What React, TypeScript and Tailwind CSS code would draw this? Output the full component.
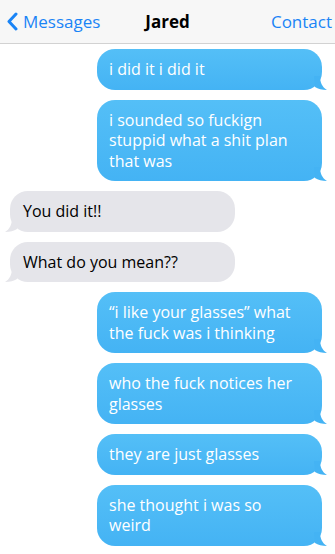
import React from "react";

const blue = [
  "i did it i did it",
  "i sounded so fuckign stuppid what a shit plan that was",
];
const gray = ["You did it!!", "What do you mean??"];
const blue2 = [
  "\u201ci like your glasses\u201d what the fuck was i thinking",
  "who the fuck notices her glasses",
  "they are just glasses",
  "she thought i was so weird",
];

function Sent({ text }: { text: string }) {
  return (
    <div className="flex justify-end pr-[13px]">
      <div className="relative w-[225px] rounded-[18px] bg-gradient-to-b from-[#54bff7] to-[#44b3f4] pl-[12px] pr-[22px] py-[10px] text-[16px] leading-[20.5px] text-white">
        {text}
        <svg className="absolute -right-[6px] bottom-0" width="14" height="14" viewBox="0 0 14 14">
          <path d="M0 0 L6 0 C6 6 8 11 13 14 C8 14 4 13 1 11 Z" fill="#44b3f4" />
        </svg>
      </div>
    </div>
  );
}

function Received({ text }: { text: string }) {
  return (
    <div className="flex justify-start pl-[10px]">
      <div className="relative w-[225px] rounded-[18px] bg-[#e5e5ea] px-[13px] py-[10px] text-[16px] leading-[20.5px] text-black">
        {text}
        <svg className="absolute -left-[6px] bottom-0" width="14" height="14" viewBox="0 0 14 14">
          <path d="M14 0 L8 0 C8 6 6 11 1 14 C6 14 10 13 13 11 Z" fill="#e5e5ea" />
        </svg>
      </div>
    </div>
  );
}

export default function App() {
  return (
    <div className="w-[335px] h-[554px] bg-white overflow-hidden" style={{ fontFamily: '"Open Sans", sans-serif' }}>
      <div className="h-[44px] bg-[#f7f7f7] border-b border-[#d2d2d2] flex items-center relative">
        <div className="flex items-center pl-[6px] text-[#1a84f6] text-[17px]">
          <svg width="12" height="19" viewBox="0 0 12 19" className="mr-[5px]">
            <path d="M10 2 L3 9.5 L10 17" stroke="#1a84f6" strokeWidth="3" fill="none" strokeLinecap="round" strokeLinejoin="round" />
          </svg>
          <span>Messages</span>
        </div>
        <div className="absolute left-0 right-0 text-center text-[17px] font-bold text-black pointer-events-none">Jared</div>
        <div className="ml-auto pr-[3px] text-[#1a84f6] text-[17px]">Contact</div>
      </div>
      <div className="flex flex-col gap-[10px] pt-[5px]">
        {blue.map((t) => (
          <Sent key={t} text={t} />
        ))}
        {gray.map((t) => (
          <Received key={t} text={t} />
        ))}
        {blue2.map((t) => (
          <Sent key={t} text={t} />
        ))}
      </div>
    </div>
  );
}
